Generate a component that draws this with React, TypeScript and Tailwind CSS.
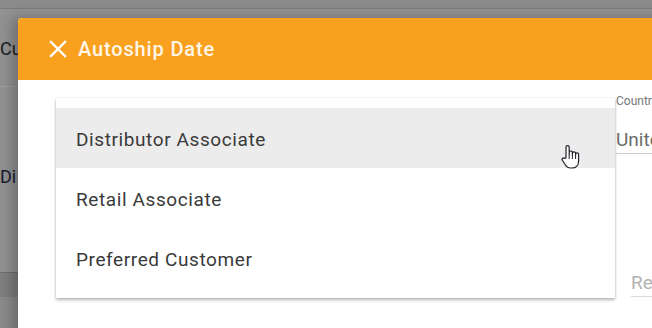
import React from "react";

const font = { fontFamily: "Roboto, 'Noto Sans', sans-serif" };

export default function App() {
  return (
    <div className="relative w-[652px] h-[328px] overflow-hidden bg-[#929292]" style={font}>
      {/* background page (under overlay) */}
      <div className="flex flex-col h-full">
        <div className="h-[9px] bg-[#8b8b8b] border-b border-[#7b7b7b]" />
        <div className="h-[78px] flex items-center border-b border-[#a0a0a0]">
          <span className="text-[18px] text-[#1c1c1c] pt-[2px]">Cu</span>
        </div>
        <div className="h-[186px] flex items-start pt-[76px] border-b border-[#6f6f6f]">
          <span className="text-[18px] text-[#1a1a2e]">Di</span>
        </div>
        <div className="h-[24px] bg-[#7f7f7f]" />
        <div className="flex-1 bg-[#8c8c8c]" />
      </div>

      {/* dialog */}
      <div className="absolute left-[18px] top-[18px] w-[660px] h-[340px] bg-white rounded-tl-[4px] overflow-hidden shadow-[-6px_0_14px_rgba(0,0,0,0.25)]">
        <div className="h-[62px] bg-[#f9a11f] flex items-center pl-[31px] gap-[11px]">
          <svg width="18" height="18" viewBox="0 0 18 18" className="shrink-0">
            <path d="M2 2 L16 16 M16 2 L2 16" stroke="#fff" strokeWidth="2.4" strokeLinecap="square" />
          </svg>
          <span className="text-[20px] font-medium text-[#fff6e8] tracking-[0.85px]">Autoship Date</span>
        </div>

        <div className="relative flex pt-[18px] pl-[38px]">
          {/* dropdown menu */}
          <div className="w-[559px] h-[200px] bg-white py-[10px] shadow-[0_2px_3px_rgba(0,0,0,0.28),0_0_2px_rgba(0,0,0,0.1)] z-10">
            <div className="h-[60px] bg-[#ececec] flex items-center pl-[20px] pt-[4px] text-[19px] tracking-[0.6px] text-[#3a3a3a] relative">
              Distributor Associate
              <svg width="20" height="26" viewBox="0 0 20 26" className="absolute left-[505px] top-[36px]">
                <path
                  d="M5 14 V3.2 a1.6 1.6 0 0 1 3.2 0 V11 V8.6 a1.6 1.6 0 0 1 3.2 0 V11 V9.4 a1.6 1.6 0 0 1 3.2 0 V11.6 V10.4 a1.5 1.5 0 0 1 3 0 V17 c0 4 -2.5 7 -6.5 7 h-1.5 c-2.5 0 -4 -1.2 -5.2 -3 L1.4 16.3 a1.5 1.5 0 0 1 2.4 -1.8 Z"
                  fill="#fff"
                  stroke="#1f1f2a"
                  strokeWidth="1.2"
                  strokeLinejoin="round"
                />
                <path d="M8.2 11 V15 M11.4 11 V15 M14.6 11.6 V15" stroke="#1f1f2a" strokeWidth="1" />
              </svg>
            </div>
            <div className="h-[60px] flex items-center pl-[20px] pt-[4px] text-[19px] tracking-[0.6px] text-[#3a3a3a]">Retail Associate</div>
            <div className="h-[60px] flex items-center pl-[20px] pt-[4px] text-[19px] tracking-[0.6px] text-[#3a3a3a]">Preferred Customer</div>
          </div>

          {/* right side form fields */}
          <div className="flex flex-col w-[60px]">
            <div className="pl-[1px]">
              <div className="text-[12px] text-[#777] leading-none -mt-[3px] whitespace-nowrap">Country</div>
              <div className="mt-[22px] pb-[2px] border-b border-[#cfcfcf] text-[19px] text-[#6b6b6b] leading-[22px] whitespace-nowrap">United States</div>
            </div>
            <div className="ml-[16px] mt-[118px] pb-[2px] border-b border-[#dcdcdc] text-[19px] text-[#b3b3b3] leading-[22px] whitespace-nowrap">Re</div>
          </div>
        </div>
      </div>
    </div>
  );
}
